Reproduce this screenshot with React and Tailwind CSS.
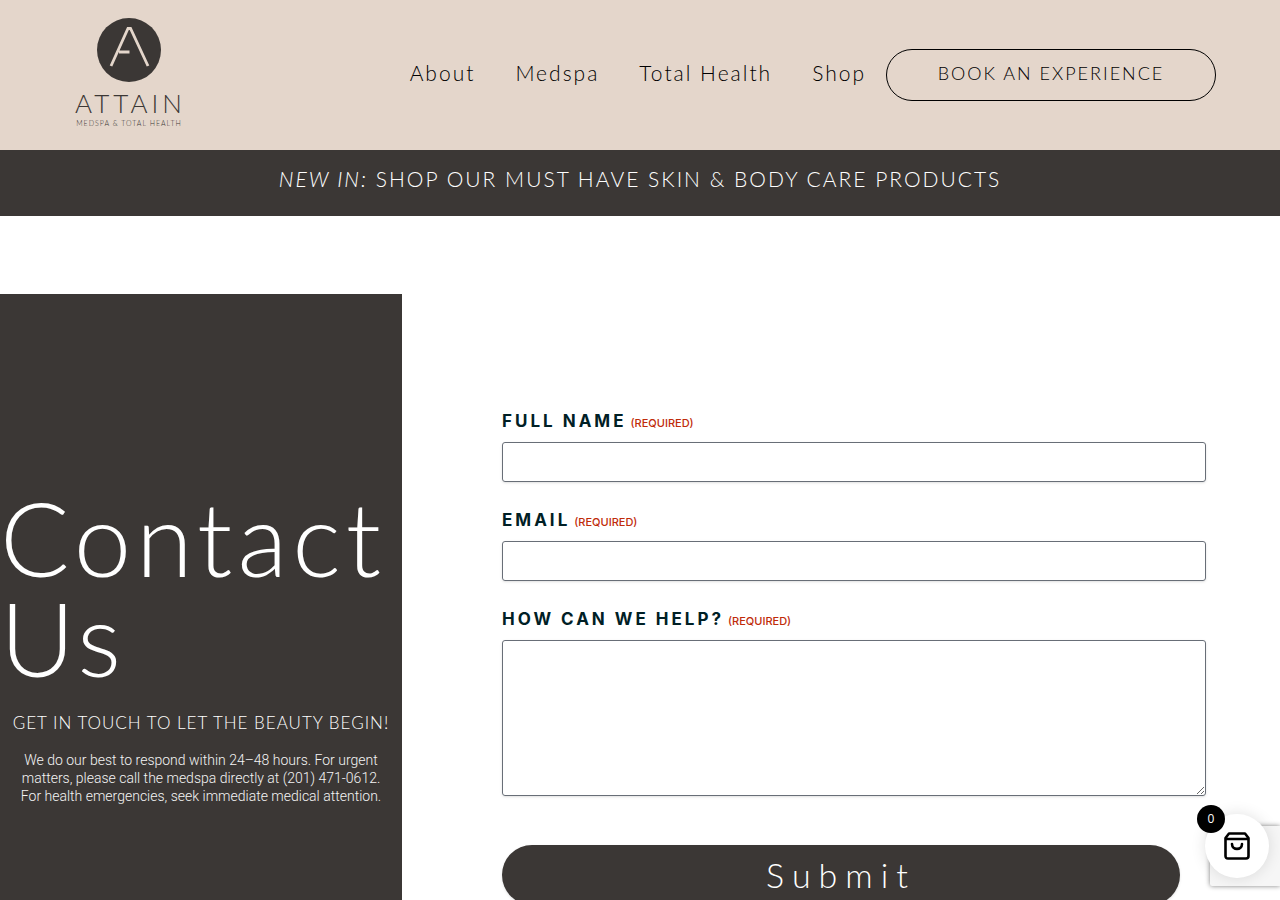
import React, { useState } from "react";

const navLinks = ["About", "Medspa", "Total Health", "Shop"];

const Logo = () => (
  <a href="#home" aria-label="Attain" className="block w-[108px] shrink-0 text-center font-['Lato',sans-serif] text-[#3b3735]">
    <svg viewBox="0 0 64 64" className="mx-auto block size-16" aria-hidden="true">
      <circle cx="32" cy="32" r="32" fill="#3b3735" />
      <path
        d="M14 48 L31 10.5 H33.5 L51 48 M22 34 H32.5"
        fill="none"
        stroke="#e4d6cb"
        strokeWidth="2.8"
      />
    </svg>
    <span className="mt-[7px] block text-[26px] leading-7 font-light tracking-[4px] whitespace-nowrap">ATTAIN</span>
    <span className="block text-[7px] leading-3 font-light tracking-[1px] whitespace-nowrap">MEDSPA &amp; TOTAL HEALTH</span>
  </a>
);

const Header = () => (
  <header className="flex h-[150px] items-start justify-between bg-[#e4d6cb] pt-[18px] pr-16 pl-[75px] font-['Lato',sans-serif] text-black">
    <Logo />
    <div className="mt-[31px] flex items-center gap-5">
      <nav className="flex gap-10 pb-1">
        {navLinks.map((link) => (
          <a key={link} href="#" className="text-[21px] leading-6 font-light tracking-[2px] whitespace-nowrap">
            {link}
          </a>
        ))}
      </nav>
      <a
        href="#book"
        className="flex h-[52px] w-[330px] items-center justify-center rounded-full border border-black pb-1 text-[18px] font-light tracking-[2px] whitespace-nowrap"
      >
        BOOK AN EXPERIENCE
      </a>
    </div>
  </header>
);

const Field = ({ id, label, type, multiline, value, onChange }) => (
  <div className="mb-[27px]">
    <label htmlFor={id} className="mb-2 flex h-6 items-baseline gap-1 leading-[22px] whitespace-nowrap">
      <span className="text-[17px] font-bold tracking-[3px] text-[#002025]">{label}</span>
      <span className="text-[11px] font-medium text-[#c02b0a]">(REQUIRED)</span>
    </label>
    {multiline ? (
      <textarea
        id={id}
        required
        value={value}
        onChange={onChange}
        className="block h-[156px] w-full resize-y rounded-[3px] border border-[#686e77] p-3 shadow-sm"
      />
    ) : (
      <input
        id={id}
        type={type}
        required
        value={value}
        onChange={onChange}
        className="block h-10 w-full rounded-[3px] border border-[#686e77] px-3 shadow-sm"
      />
    )}
  </div>
);

const ContactForm = () => {
  const [form, setForm] = useState({ name: "", email: "", message: "" });

  const handleChange = (field) => (e) => setForm({ ...form, [field]: e.target.value });

  return (
    <form className="flex-1 pt-[116px] pr-[74px] pl-[100px] font-['Inter',sans-serif]" onSubmit={(e) => e.preventDefault()}>
      <Field id="name" label="FULL NAME" type="text" value={form.name} onChange={handleChange("name")} />
      <Field id="email" label="EMAIL" type="email" value={form.email} onChange={handleChange("email")} />
      <Field id="message" label="HOW CAN WE HELP?" multiline value={form.message} onChange={handleChange("message")} />
      <div className="pt-[22px] pr-[26px]">
        <button
          type="submit"
          className="h-[60px] w-full rounded-full bg-[#3b3735] pb-0.5 font-['Lato',sans-serif] text-[34px] font-light tracking-[8px] text-white shadow-sm"
        >
          Submit
        </button>
      </div>
    </form>
  );
};

const CartButton = () => (
  <>
    {/* reCAPTCHA badge sits behind the cart */}
    <div className="fixed right-0 bottom-[14px] h-[60px] w-[70px] rounded-l-[2px] bg-[#f6f6f6] shadow-[0_0_5px_gray]" />
    <button
      type="button"
      aria-label="Cart"
      className="fixed right-[11px] bottom-[22px] flex size-16 items-center justify-center rounded-full bg-white shadow-[0_0_15px_rgba(0,0,0,0.12)]"
    >
      <svg viewBox="0 0 26 28" className="h-7 w-[26px]" fill="none" stroke="black" strokeWidth="2.6" strokeLinecap="round" strokeLinejoin="round" aria-hidden="true">
        <path d="M5 1.5 H21 L24.5 6 V24 Q24.5 26.5 22 26.5 H4 Q1.5 26.5 1.5 24 V6 Z M1.5 7 H24.5 M8 12 C8 18.5 18 18.5 18 12" />
      </svg>
      <span className="absolute -top-[9px] -left-2 flex size-7 items-center justify-center rounded-full bg-black font-['Open_Sans',sans-serif] text-xs text-white">
        0
      </span>
    </button>
  </>
);

export default function App() {
  return (
    <div className="min-h-screen bg-white">
      <Header />
      <div className="flex h-[66px] justify-center bg-[#3b3735] pt-[15px] font-['Lato',sans-serif] text-[21px] leading-7 font-light tracking-[2px] whitespace-nowrap text-white">
        <p>
          <em>NEW IN:</em> SHOP OUR MUST HAVE SKIN &amp; BODY CARE PRODUCTS
        </p>
      </div>

      <main className="mt-[78px] flex">
        <section className="w-[402px] shrink-0 bg-[#3b3735] pt-[193px] pb-[200px] text-white">
          <h1 className="font-['Lato',sans-serif] text-[103px] leading-[100px] font-light tracking-[5px]">
            Contact
            <br />
            Us
          </h1>
          <h2 className="mt-6 text-center font-['Lato',sans-serif] text-[17px] leading-6 font-light tracking-[1px] whitespace-nowrap">
            GET IN TOUCH TO LET THE BEAUTY BEGIN!
          </h2>
          <p className="mt-4 text-center font-['Roboto',sans-serif] text-sm leading-[18px] font-light text-[#f4f4f4]">
            We do our best to respond within 24–48 hours. For urgent
            <br />
            matters, please call the medspa directly at (201) 471-0612.
            <br />
            For health emergencies, seek immediate medical attention.
          </p>
        </section>
        <ContactForm />
      </main>
      <CartButton />
    </div>
  );
}
